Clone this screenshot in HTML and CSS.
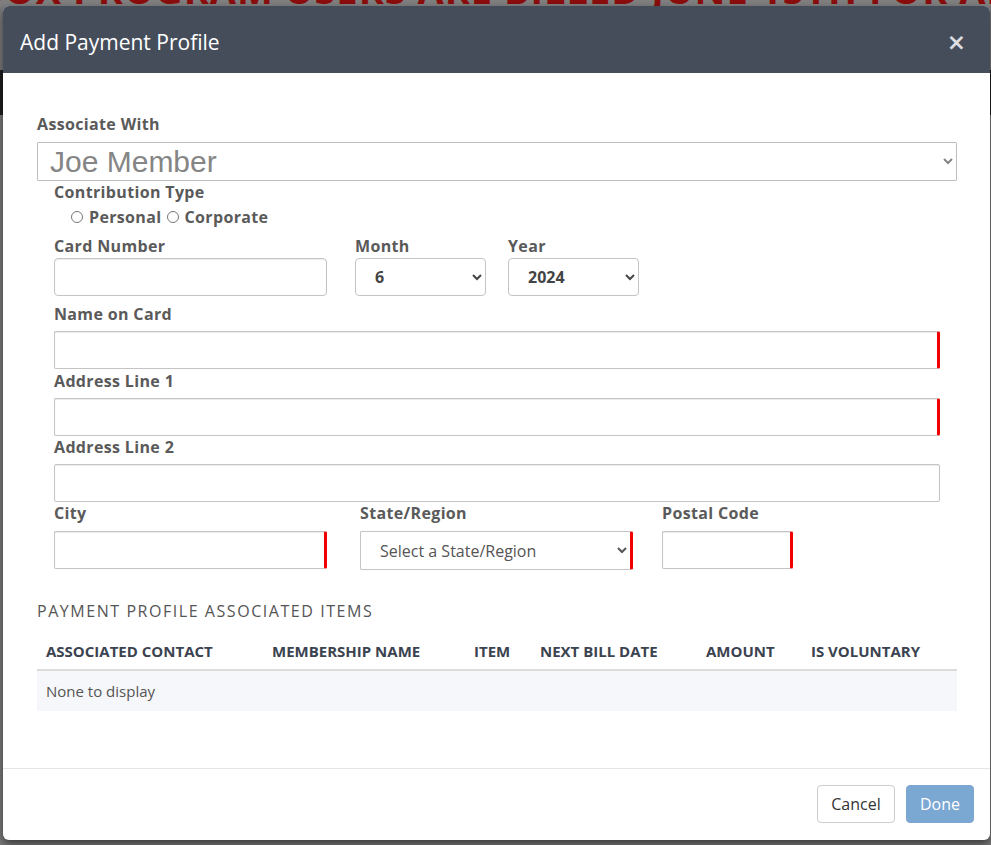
FILE: index.html
```html
<!DOCTYPE html>
<html>
<head>
<meta charset="utf-8">
<title>Add Payment Profile</title>
<link rel="stylesheet" href="styles.css">
</head>
<body>
<div class="page">
  <div class="banner"><span class="banner-text">BOX PROGRAM USERS ARE BILLED JUNE 15TH FOR ANNUAL</span></div>
  <div class="nav"></div>
</div>
<div class="modal">
  <div class="modal-header">
    <h4 class="modal-title">Add Payment Profile</h4>
    <button class="close" type="button">&times;</button>
  </div>
  <div class="modal-body">
    <label class="lbl lbl-assoc">Associate With</label>
    <select class="assoc"><option>Joe Member</option></select>
    <div class="inner">
      <div class="lbl lbl-contrib">Contribution Type</div>
      <div class="radios">
        <label class="radio"><input type="radio" name="ct">Personal</label>
        <label class="radio"><input type="radio" name="ct">Corporate</label>
      </div>
      <div class="row row-card">
        <div class="col col-card">
          <label class="lbl lbl-tight">Card Number</label>
          <input class="ctl ctl-round" type="text">
        </div>
        <div class="col col-month">
          <label class="lbl lbl-tight">Month</label>
          <select class="ctl ctl-round sel-bold"><option>6</option></select>
        </div>
        <div class="col col-year">
          <label class="lbl lbl-tight">Year</label>
          <select class="ctl ctl-round sel-bold"><option>2024</option></select>
        </div>
      </div>
      <div class="group group-first">
        <label class="lbl">Name on Card</label>
        <input class="ctl req" type="text">
      </div>
      <div class="group group-second">
        <label class="lbl">Address Line 1</label>
        <input class="ctl req" type="text">
      </div>
      <div class="group group-third">
        <label class="lbl">Address Line 2</label>
        <input class="ctl" type="text">
      </div>
      <div class="row row-city">
        <div class="col col-city">
          <label class="lbl">City</label>
          <input class="ctl req" type="text">
        </div>
        <div class="col col-state">
          <label class="lbl">State/Region</label>
          <select class="ctl req sel-state"><option>Select a State/Region</option></select>
        </div>
        <div class="col col-postal">
          <label class="lbl">Postal Code</label>
          <input class="ctl req" type="text">
        </div>
      </div>
    </div>
    <h5 class="section-title">PAYMENT PROFILE ASSOCIATED ITEMS</h5>
    <table class="items">
      <thead>
        <tr>
          <th class="c1">ASSOCIATED CONTACT</th>
          <th class="c2">MEMBERSHIP NAME</th>
          <th class="c3">ITEM</th>
          <th class="c4">NEXT BILL DATE</th>
          <th class="c5">AMOUNT</th>
          <th class="c6">IS VOLUNTARY</th>
        </tr>
      </thead>
      <tbody>
        <tr><td colspan="6">None to display</td></tr>
      </tbody>
    </table>
  </div>
  <div class="modal-footer">
    <button class="btn btn-default" type="button">Cancel</button>
    <button class="btn btn-primary" type="button">Done</button>
  </div>
</div>
</body>
</html>
```

FILE: styles.css
```css
html, body {
  margin: 0;
  padding: 0;
  height: 100%;
}
body {
  background: #7b7b7b;
  font-family: "Open Sans", "Noto Sans", sans-serif;
  overflow: hidden;
  position: relative;
}
.page {
  position: relative;
  z-index: 0;
  height: 845px;
}
.banner {
  height: 6px;
  overflow: hidden;
  background: #808080;
  white-space: nowrap;
  margin-left: -22px;
}
.banner-text {
  display: block;
  color: #8c0d0d;
  font-family: "Open Sans", sans-serif;
  font-weight: 700;
  font-size: 38px;
  line-height: 38px;
  margin-top: -30px;
  letter-spacing: 1px;
}
.nav {
  margin-top: 64px;
  height: 45px;
  background: #1e1e1e;
}
.modal {
  position: absolute;
  z-index: 10;
  left: 3px;
  top: 6px;
  width: 987px;
  height: 834px;
  background: #fff;
  border-radius: 6px;
  box-shadow: 0 4px 10px rgba(0, 0, 0, 0.55);
  display: flex;
  flex-direction: column;
  overflow: hidden;
}
.modal-header {
  height: 67px;
  box-sizing: border-box;
  flex: none;
  background: #454d5b;
  display: flex;
  align-items: center;
  justify-content: space-between;
  padding: 5px 24px 0 17px;
}
.modal-title {
  margin: 0;
  color: #fff;
  font-weight: 400;
  font-size: 21px;
  line-height: 28px;
}
.close {
  background: none;
  border: 0;
  padding: 0;
  color: #dcdde0;
  font-family: "DejaVu Sans", sans-serif;
  font-weight: 700;
  font-size: 23px;
  line-height: 24px;
  cursor: pointer;
}
.modal-body {
  flex: 1;
  padding: 41px 33px 0 34px;
}
.lbl {
  display: block;
  color: #5a5a5a;
  font-weight: 700;
  font-size: 16px;
  letter-spacing: 0.35px;
  line-height: 20px;
  margin-bottom: 7px;
}
.lbl-assoc {
  margin-bottom: 8px;
}
.assoc {
  display: block;
  width: 100%;
  height: 39px;
  box-sizing: border-box;
  border: 1px solid #bdbdbd;
  border-radius: 1px;
  background: #fff;
  color: #858585;
  font-family: "Liberation Sans", Arial, sans-serif;
  font-size: 30px;
  padding: 0 8px;
  margin: 0;
}
.inner {
  padding: 0 17px;
}
.lbl-contrib {
  margin: 1px 0 0;
}
.radios {
  display: flex;
  align-items: center;
  padding-left: 16px;
  margin-top: 5px;
  height: 20px;
}
.radio {
  display: flex;
  align-items: center;
  color: #5a5a5a;
  font-weight: 700;
  font-size: 16px;
  letter-spacing: 0.35px;
  line-height: 20px;
  margin-right: 4px;
}
.radio input {
  margin: 0 6px 0 1px;
  width: 12px;
  height: 12px;
}
.row {
  display: flex;
}
.row-card {
  margin-top: 9px;
}
.lbl-tight {
  margin-bottom: 2px;
}
.col-card {
  width: 273px;
  margin-right: 28px;
}
.col-month {
  width: 131px;
  margin-right: 22px;
}
.col-year {
  width: 131px;
}
.ctl {
  display: block;
  width: 100%;
  height: 38px;
  box-sizing: border-box;
  border: 1px solid #c4c4c4;
  border-radius: 2px;
  background: #fff;
  box-shadow: inset 0 1px 1px rgba(0, 0, 0, 0.08);
  font-family: "Open Sans", sans-serif;
  font-size: 16px;
  color: #555;
  padding: 0 12px;
  margin: 0;
}
.ctl-round {
  border-radius: 4px;
}
select.ctl {
  padding: 0 12px 0 15px;
  box-shadow: none;
}
.col-month select.ctl,
.col-year select.ctl {
  margin-top: 1px;
}
.sel-bold {
  font-weight: 700;
  color: #444;
}
.req {
  border-right: 3px solid #f20000;
}
.group-first {
  margin-top: 8px;
}
.group-second {
  margin-top: 2px;
}
.group-third {
  margin-top: 1px;
}
.row-city {
  margin-top: 1px;
}
.row-city .lbl {
  margin-bottom: 8px;
}
.col-city {
  width: 273px;
  margin-right: 33px;
}
.col-state {
  width: 273px;
  margin-right: 29px;
}
.col-postal {
  width: 131px;
}
.sel-state {
  height: 39px;
  padding-left: 15px;
}
.section-title {
  margin: 31px 0 0;
  color: #555;
  font-weight: 400;
  font-size: 16px;
  line-height: 20px;
  letter-spacing: 1.55px;
}
.items {
  width: 100%;
  border-collapse: collapse;
  margin-top: 12px;
}
.items th {
  text-align: left;
  color: #3b4350;
  font-weight: 700;
  font-size: 15px;
  line-height: 20px;
  padding: 8px 9px;
  border-bottom: 2px solid #dcdcdc;
  white-space: nowrap;
}
.items .c1 { width: 208px; }
.items .c2 { width: 184px; }
.items .c3 { width: 48px; }
.items .c4 { width: 148px; }
.items .c5 { width: 87px; }
.items td {
  background: #f5f7fa;
  color: #555;
  font-size: 15px;
  line-height: 20px;
  padding: 10px 9px;
}
.modal-footer {
  flex: none;
  border-top: 1px solid #e5e5e5;
  padding: 16px 16px 17px;
  display: flex;
  justify-content: flex-end;
  gap: 11px;
}
.btn {
  height: 38px;
  box-sizing: border-box;
  border-radius: 4px;
  font-family: "Open Sans", sans-serif;
  font-size: 16px;
  line-height: 22px;
  padding: 0 12px;
  margin: 0;
  cursor: pointer;
}
.btn-default {
  background: #fff;
  border: 1px solid #cccccc;
  color: #333;
  width: 78px;
}
.btn-primary {
  background: #7ba7d3;
  border: 1px solid #7ba7d3;
  color: #fff;
  width: 68px;
}
```
